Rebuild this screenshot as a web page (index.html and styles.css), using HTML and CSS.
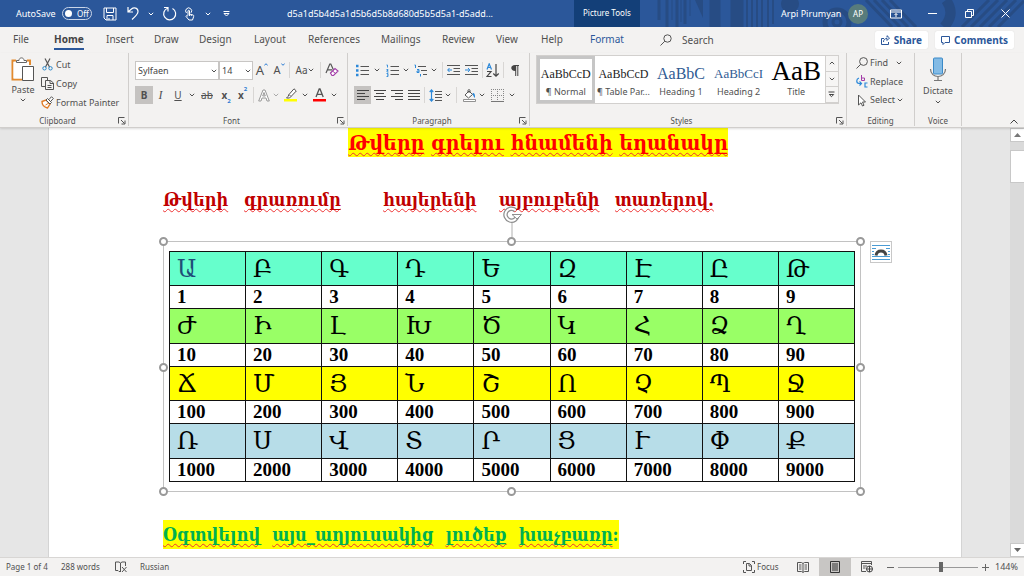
FILE: index.html
```html
<!DOCTYPE html>
<html lang="en">
<head>
<meta charset="utf-8">
<meta name="viewport" content="width=device-width, initial-scale=1">
<title>Document editor</title>
<link rel="stylesheet" href="styles.css">
</head>
<body>
<svg class="defs" aria-hidden="true">
  <symbol id="chev" viewBox="0 0 6 4"><path d="M.8.8 3 3 5.2.8" fill="none" stroke="currentColor" stroke-width="1"/></symbol>
  <symbol id="launch" viewBox="0 0 8 8"><path d="M.5 6.500V.5H6.500M3 3 6.500 6.500M7 3.500V7H3.500" fill="none" stroke="#555"/></symbol>
</svg>

<header class="titlebar">
  <svg class="pattern" viewBox="0 0 370 27" aria-hidden="true">
    <g fill="none" stroke="#274c84">
      <path d="M5 0V20M13 0V27M23 0V27M31 0V24" stroke-width="3"/>
      <path d="M18 0V20M27 0V22M36 0V16" stroke-width="1"/>
      <path d="M61 0V27" stroke-width="11"/><path d="M83 0V27" stroke-width="13"/>
      <path d="M93 0V27M98 0V27M103 0V27M108 0V27M114 0V27M119 0V24" stroke-width="2"/>
      <path d="M41 0 49 18V0Z" fill="#274c84" stroke="none"/>
      <circle cx="136" cy="4" r="9" fill="#274c84" stroke="none"/>
      <circle cx="183" cy="22" r="12" stroke-width="5"/><circle cx="183" cy="22" r="4" stroke-width="3"/>
      <path d="M212 0 238 27M220 0 246 27M228 0 254 27M236 0 262 27" stroke-width="3"/>
      <path d="M292 0Q302 14 290 27" stroke-width="10"/>
      <path d="M308 27 335 0M317 27 344 0M326 27 353 0M335 27 362 0M344 27 370 1" stroke-width="3"/>
    </g>
  </svg>
  <div class="quick">
    <span id="autosave">AutoSave</span>
    <button class="toggle" aria-labelledby="autosave"><i></i>Off</button>
    <button aria-label="Save"><svg width="14" height="14" viewBox="0 0 14 14"><path d="M1 1H13V13H3L1 11ZM3.500 1V5.500H10.500V1M4 13V8.500H10V13M6 11V13" fill="none" stroke="#fff"/></svg></button>
    <button aria-label="Undo"><svg width="14" height="15" viewBox="0 0 14 15"><path d="M2 1V6H7M2 6 5.500 3C8 1 12 2 12 5.500C12 8 10 10 6 13.500" fill="none" stroke="#fff" stroke-width="1.200"/></svg></button>
    <button aria-label="Undo list"><svg class="chev"><use href="#chev"/></svg></button>
    <button aria-label="Repeat"><svg width="15" height="15" viewBox="0 0 15 15"><path d="M2 1.500H6V5.500M5.500 2.200A6 6 0 1 0 10.500 2.500" fill="none" stroke="#fff" stroke-width="1.200"/></svg></button>
    <button aria-label="Touch mode"><svg width="11" height="14" viewBox="0 0 11 14"><path d="M2.500 6A3 3 0 1 1 7 5.800M4 8.500V4C4 3 5.500 3 5.500 4V7L9 8C10 8.300 9.800 9 9.500 10L8.500 13H5L2 9.500C2 8.500 3 8.300 4 9.300M5.500 7V9M7.300 7.500V9" fill="none" stroke="#fff"/></svg></button>
    <button aria-label="Touch list"><svg class="chev"><use href="#chev"/></svg></button>
    <button aria-label="Customize"><svg width="7" height="6" viewBox="0 0 7 6"><path d="M.5.5H6.500M1 2.500H6L3.500 5Z" fill="none" stroke="#fff"/></svg></button>
  </div>
  <div class="doc-title">d5a1d5b4d5a1d5b6d5b8d680d5b5d5a1-d5add...</div>
  <div class="tools">Picture Tools</div>
  <div class="account">
    <span>Arpi Pirumyan</span>
    <span class="avatar">AP</span>
    <button aria-label="Ribbon options"><svg width="12" height="10" viewBox="0 0 12 10"><path d="M.5 1H11.500V9H.5ZM.5 3H11.500M6 8V4.500M4.500 6 6 4.500 7.500 6" fill="none" stroke="#fff"/></svg></button>
    <button aria-label="Minimize"><svg width="9" height="9" viewBox="0 0 9 9"><path d="M0 4.500H9" stroke="#fff"/></svg></button>
    <button aria-label="Restore"><svg width="9" height="9" viewBox="0 0 9 9"><path d="M.5 2.500H6.500V8.500H.5ZM2.500 2.500V.5H8.500V6.500H6.500" fill="none" stroke="#fff"/></svg></button>
    <button aria-label="Close"><svg width="9" height="9" viewBox="0 0 9 9"><path d="M.5.5 8.500 8.500M8.500.5.5 8.500" stroke="#fff"/></svg></button>
  </div>
</header>

<nav class="tabs">
  <div class="tablist">
    <a href="#">File</a><a href="#" class="current">Home</a><a href="#">Insert</a><a href="#">Draw</a><a href="#">Design</a><a href="#">Layout</a><a href="#">References</a><a href="#">Mailings</a><a href="#">Review</a><a href="#">View</a><a href="#">Help</a><a href="#" class="format">Format</a>
    <button class="search"><svg width="12" height="12" viewBox="0 0 12 12"><circle cx="7.500" cy="4.500" r="3.700" fill="none" stroke="#555"/><path d="M4.800 7.200.5 11.500" stroke="#555"/></svg>Search</button>
  </div>
  <div class="share">
    <button><svg width="9" height="10" viewBox="0 0 9 10"><path d="M3 3.500H.5V9.500H7.500V7M2.500 7C2.500 4.500 4 3.500 6 3.500V5.500L8.500 3 6 .7V2.500" fill="none" stroke="#2b579a"/></svg>Share</button>
    <button><svg width="9" height="9" viewBox="0 0 9 9"><path d="M.5.5H8.500V6.500H4L2 8.500V6.500H.5Z" fill="none" stroke="#2b579a"/></svg>Comments</button>
  </div>
</nav>

<section class="ribbon">
  <div class="group clipboard">
    <div class="clip">
      <button class="paste"><svg width="24" height="25" viewBox="0 0 24 25"><path d="M5 3.500H1.500V22.500H11M16 3.500H19V8" fill="none" stroke="#e38a2e" stroke-width="2"/><path d="M2.500 5H18V9H11V21.500H2.500Z" fill="#fff"/><path d="M5.500 5.500V3.500H8C8 0 13 0 13 3.500H15.500V5.500Z" fill="#fff" stroke="#666"/><path d="M11.500 9.500H22.500V23.500H11.500Z" fill="#fff" stroke="#555"/></svg><span>Paste</span><svg class="chev"><use href="#chev"/></svg></button>
      <div class="clip-list">
        <button><svg width="13" height="13" viewBox="0 0 13 13"><path d="M4 .5 8.500 9M9 .5 4.500 9" fill="none" stroke="#555" stroke-width="1.200"/><circle cx="3.500" cy="10.300" r="1.700" fill="none" stroke="#2b88c9"/><circle cx="9.500" cy="10.300" r="1.700" fill="none" stroke="#2b88c9"/></svg>Cut</button>
        <button><svg width="13" height="13" viewBox="0 0 13 13"><path d="M4.500 9.500H.5V.5H6.500V3M4.500 3.500H9.500L12.500 6V12.500H4.500ZM9 3.500V6.500H12.500M6.500 8.500H10.500M6.500 10.500H10.500" fill="none" stroke="#555"/></svg>Copy</button>
        <button><svg width="13" height="13" viewBox="0 0 13 13"><path d="M1 5.500 5 4 9 8 6.500 12C3 11 1 9 1 5.500Z" fill="#fff" stroke="#e07b26" stroke-width="1.400"/><path d="M4.500 9 8 7" stroke="#e07b26"/><path d="M5 4 6.500 2.500 10.500 6.500 9 8ZM8 3.500 10.500.7 12.300 2.500 9.600 5.500" fill="#fff" stroke="#555"/></svg>Format Painter</button>
      </div>
    </div>
    <div class="label wide">Clipboard<svg class="launch"><use href="#launch"/></svg></div>
  </div>

  <div class="group font">
    <div class="rows">
      <div class="row font1">
        <span class="pick"><select aria-label="Font"><option>Sylfaen</option></select><svg class="chev"><use href="#chev"/></svg></span>
        <span class="pick"><select aria-label="Font size"><option>14</option></select><svg class="chev"><use href="#chev"/></svg></span>
        <button aria-label="Grow font"><span class="big">A</span><svg class="tick" viewBox="0 0 4 3"><path d="M.3 2.500 2 .7 3.700 2.500" fill="none" stroke="#2b7cd3"/></svg></button>
        <button aria-label="Shrink font"><span class="mid">A</span><svg class="tick" viewBox="0 0 4 3"><path d="M.3.5 2 2.300 3.700.5" fill="none" stroke="#2b7cd3"/></svg></button>
        <i class="sep"></i>
        <button><span>Aa</span><svg class="chev"><use href="#chev"/></svg></button>
        <i class="sep"></i>
        <button aria-label="Clear formatting"><svg width="14" height="14" viewBox="0 0 14 14"><path d="M1 10 4.800 1H5.800L8.500 7M2.500 6.800H7" fill="none" stroke="#555" stroke-width="1.200"/><path d="M5.500 10 10 5.500 13 8 8.500 12.500H7Z" fill="#fff" stroke="#a33ea8" stroke-width="1.200"/><path d="M7.500 8 10.500 10.500" stroke="#a33ea8"/></svg></button>
      </div>
      <div class="row font2">
        <button class="on"><b>B</b></button>
        <button><em>I</em></button>
        <button><u>U</u></button>
        <button aria-label="Underline styles"><svg class="chev"><use href="#chev"/></svg></button>
        <button><s>ab</s></button>
        <button><b>x</b><sub>2</sub></button>
        <button><b>x</b><sup>2</sup></button>
        <i class="sep"></i>
        <button aria-label="Text effects"><svg width="12" height="13" viewBox="0 0 12 13"><path d="M.7 12 5 1H7L11.300 12H9L8 9H4L3 12ZM4.700 7H7.300L6 3.500Z" fill="#fff" stroke="#999"/></svg></button>
        <button class="dim" aria-label="Effects list"><svg class="chev"><use href="#chev"/></svg></button>
        <button aria-label="Highlight"><svg width="14" height="14" viewBox="0 0 14 14"><path d="M0 11H13V13.500H0Z" fill="#ff0"/><path d="M5 6.500 10 .8 12.300 3 7 8.500ZM5 6.500 4 8.500 2.500 10H5.500L7 8.500" fill="#fff" stroke="#555"/></svg></button>
        <button aria-label="Highlight colours"><svg class="chev"><use href="#chev"/></svg></button>
        <button aria-label="Font colour"><svg width="14" height="14" viewBox="0 0 14 14"><path d="M0 11H13V13.500H0Z" fill="red"/><path d="M3 9 6.200 1H7L10.200 9M4.200 6.300H9" fill="none" stroke="#555" stroke-width="1.300"/></svg></button>
        <button aria-label="Font colours"><svg class="chev"><use href="#chev"/></svg></button>
      </div>
    </div>
    <div class="label wide">Font<svg class="launch"><use href="#launch"/></svg></div>
  </div>

  <div class="group para">
    <div class="rows">
      <div class="row para1">
        <button aria-label="Bullets"><svg width="13" height="13" viewBox="0 0 13 13"><path d="M0 2H2.500M0 6.500H2.500M0 11H2.500" stroke="#2b88d9" stroke-width="2.500"/><path d="M4.500 2.500H13M4.500 6.500H13M4.500 10.500H13" stroke="#555"/></svg></button>
        <button aria-label="Bullet list"><svg class="chev"><use href="#chev"/></svg></button>
        <button aria-label="Numbering"><svg width="13" height="13" viewBox="0 0 13 13"><path d="M.5 1H1.500V3.500M.5 5.500H2V6.500H1V8H2.500M.5 9.500H2V12.500H.5M1 11H2" fill="none" stroke="#2b88d9" stroke-width=".9"/><path d="M4.500 2.500H13M4.500 6.500H13M4.500 10.500H13" stroke="#555"/></svg></button>
        <button aria-label="Numbering list"><svg class="chev"><use href="#chev"/></svg></button>
        <button aria-label="Multilevel"><svg width="13" height="13" viewBox="0 0 13 13"><path d="M.5 1H1.500V4M3 5.500H5V8.500H3V7H5M6.500 10V12.500" fill="none" stroke="#2b88d9"/><path d="M4 2.500H12M7 6.500H13M9 10.500H13" stroke="#555"/></svg></button>
        <button aria-label="Multilevel list"><svg class="chev"><use href="#chev"/></svg></button>
        <i class="sep"></i>
        <button aria-label="Decrease indent"><svg width="13" height="11" viewBox="0 0 13 11"><path d="M0 .5H13M6.500 3.500H13M6.500 6.500H13M0 9.500H13" stroke="#555"/><path d="M5 5H.8M2.500 3 .7 5 2.500 7" fill="none" stroke="#2b88d9"/></svg></button>
        <button aria-label="Increase indent"><svg width="13" height="11" viewBox="0 0 13 11"><path d="M0 .5H13M6.500 3.500H13M6.500 6.500H13M0 9.500H13" stroke="#555"/><path d="M0 5H4.500M3 3 4.800 5 3 7" fill="none" stroke="#2b88d9"/></svg></button>
        <i class="sep"></i>
        <button aria-label="Sort"><svg width="14" height="15" viewBox="0 0 14 15"><path d="M1 6.500 3.200.8 5.500 6.500M1.800 4.500H4.700" fill="none" stroke="#2b88d9" stroke-width="1.200"/><path d="M1 8.500H5L1 13.500H5.500M10 1V13M7.300 10.500 10 13.200 12.700 10.500" fill="none" stroke="#444" stroke-width="1.200"/></svg></button>
        <i class="sep"></i>
        <button aria-label="Show marks"><svg width="8" height="11" viewBox="0 0 8 11"><path d="M4 0H8V1H7.300V11H6.300V1H5.200V11H4.200V6C-1 6-1 0 4 0Z" fill="#444"/></svg></button>
      </div>
      <div class="row para2">
        <button class="on" aria-label="Align left"><svg width="12" height="11" viewBox="0 0 12 11"><path d="M0 .5H12M0 3.500H8M0 6.500H12M0 9.500H8" stroke="#444"/></svg></button>
        <button aria-label="Centre"><svg width="12" height="11" viewBox="0 0 12 11"><path d="M0 .5H12M2 3.500H10M0 6.500H12M2 9.500H10" stroke="#444"/></svg></button>
        <button aria-label="Align right"><svg width="12" height="11" viewBox="0 0 12 11"><path d="M0 .5H12M4 3.500H12M0 6.500H12M4 9.500H12" stroke="#444"/></svg></button>
        <button aria-label="Justify"><svg width="12" height="11" viewBox="0 0 12 11"><path d="M0 .5H12M0 3.500H12M0 6.500H12M0 9.500H12" stroke="#444"/></svg></button>
        <i class="sep"></i>
        <button aria-label="Line spacing"><svg width="13" height="13" viewBox="0 0 13 13"><path d="M2.500 1V12M.7 3 2.500 1 4.300 3M.7 10 2.500 12 4.300 10" fill="none" stroke="#2b88d9" stroke-width="1.200"/><path d="M6 2.500H13M6 5.500H13M6 8.500H13M6 11.500H13" stroke="#555"/></svg></button>
        <button aria-label="Spacing list"><svg class="chev"><use href="#chev"/></svg></button>
        <i class="sep"></i>
        <button aria-label="Shading"><svg width="13" height="13" viewBox="0 0 13 13"><path d="M.5 10.500H12.500V12.500H.5Z" fill="#fff" stroke="#777" stroke-width=".8"/><path d="M2 6 6 2 9.500 5.500 5.500 9ZM5 4V1.500C5 .3 7 .3 7 1.500V4" fill="#fff" stroke="#555"/><path d="M9.500 4C12 4 12 6 12 9C11 8 10 7 9.500 4Z" fill="#2b88d9"/></svg></button>
        <button aria-label="Shading list"><svg class="chev"><use href="#chev"/></svg></button>
        <button aria-label="Borders"><svg width="13" height="13" viewBox="0 0 13 13"><path d="M.5 0V12M12.500 0V12M0 .5H13M6.500 0V12M0 6.500H13" fill="none" stroke="#888" stroke-dasharray="1 1"/><path d="M0 12.500H13" stroke="#777"/></svg></button>
        <button aria-label="Border list"><svg class="chev"><use href="#chev"/></svg></button>
      </div>
    </div>
    <div class="label wide">Paragraph<svg class="launch"><use href="#launch"/></svg></div>
  </div>

  <div class="group styles">
    <div class="gallery">
      <button class="picked"><span class="sample">AaBbCcD</span><span>¶ Normal</span></button>
      <button><span class="sample">AaBbCcD</span><span>¶ Table Par...</span></button>
      <button><span class="sample h1s">AaBbC</span><span>Heading 1</span></button>
      <button><span class="sample h2s">AaBbCcI</span><span>Heading 2</span></button>
      <button><span class="sample ts">AaB</span><span>Title</span></button>
      <div class="scrolls">
        <button aria-label="Previous styles"><svg class="chev up"><use href="#chev"/></svg></button>
        <button aria-label="Next styles"><svg class="chev"><use href="#chev"/></svg></button>
        <button aria-label="More styles"><svg width="7" height="7" viewBox="0 0 7 7"><path d="M.5 1H6.500M1.300 3.500H5.700L3.500 5.700Z" fill="none" stroke="#444"/></svg></button>
      </div>
    </div>
    <div class="label wide">Styles<svg class="launch"><use href="#launch"/></svg></div>
  </div>

  <div class="group editing">
    <div class="edit-list">
      <button><svg width="12" height="13" viewBox="0 0 12 13"><circle cx="7.500" cy="4.500" r="3.900" fill="none" stroke="#555"/><path d="M4.700 7.300.5 11.500" stroke="#555"/></svg>Find<svg class="chev gap"><use href="#chev"/></svg></button>
      <button><svg width="12" height="13" viewBox="0 0 12 13"><path d="M5.500 0V5.500M5.500 3H8.500V5.500H5.500" fill="none" stroke="#a33ea8"/><path d="M3 3C0 4 0 8 3 8.500H5M3.500 6.500 5.500 8.500 3.500 10.500M11.500 8H9V12H11.500" fill="none" stroke="#2b88d9" stroke-width="1.200"/></svg>Replace</button>
      <button><svg width="12" height="13" viewBox="0 0 12 13"><path d="M2.500 1V11L5 8.800 6.500 12 8 11.300 6.500 8H9.500Z" fill="#fff" stroke="#555"/></svg>Select<svg class="chev"><use href="#chev"/></svg></button>
    </div>
    <div class="label">Editing</div>
  </div>

  <div class="group voice">
    <button class="paste"><svg width="18" height="25" viewBox="0 0 18 25"><rect x="4.500" y="1" width="9" height="16" rx="1" fill="#83bbe5" stroke="#3a8ac8"/><path d="M1.500 12C1.500 22 16.500 22 16.500 12M9 19.500V23M5 23.500H13" fill="none" stroke="#777" stroke-width="1.200"/></svg><span>Dictate</span><svg class="chev"><use href="#chev"/></svg></button>
    <div class="label">Voice</div>
  </div>
  <button class="collapse" aria-label="Collapse ribbon"><svg width="8" height="5" viewBox="0 0 8 5"><path d="M.5 4.500 4 1 7.500 4.500" fill="none" stroke="#444"/></svg></button>
</section>

<main class="workspace">
  <article class="page" lang="hy">
    <h1><mark><span>Թվերը</span> <span>գրելու</span> <span>հնամենի</span> <span>եղանակը</span></mark></h1>
    <p class="intro"><span>Թվերի</span><span>գրառումը</span><span>հայերենի</span><span>այբուբենի</span><span>տառերով.</span></p>
    <figure>
      <table>
        <tbody>
        <tr class="aqua"><td class="first">Ա</td><td>Բ</td><td>Գ</td><td>Դ</td><td>Ե</td><td>Զ</td><td>Է</td><td>Ը</td><td>Թ</td></tr>
        <tr><td>1</td><td>2</td><td>3</td><td>4</td><td>5</td><td>6</td><td>7</td><td>8</td><td>9</td></tr>
        <tr class="green"><td>Ժ</td><td>Ի</td><td>Լ</td><td>Խ</td><td>Ծ</td><td>Կ</td><td>Հ</td><td>Ձ</td><td>Ղ</td></tr>
        <tr><td>10</td><td>20</td><td>30</td><td>40</td><td>50</td><td>60</td><td>70</td><td>80</td><td>90</td></tr>
        <tr class="yellow"><td>Ճ</td><td>Մ</td><td>Յ</td><td>Ն</td><td>Շ</td><td>Ո</td><td>Չ</td><td>Պ</td><td>Ջ</td></tr>
        <tr><td>100</td><td>200</td><td>300</td><td>400</td><td>500</td><td>600</td><td>700</td><td>800</td><td>900</td></tr>
        <tr class="blue"><td>Ռ</td><td>Ս</td><td>Վ</td><td>Տ</td><td>Ր</td><td>Ց</td><td>Ւ</td><td>Փ</td><td>Ք</td></tr>
        <tr><td>1000</td><td>2000</td><td>3000</td><td>4000</td><td>5000</td><td>6000</td><td>7000</td><td>8000</td><td>9000</td></tr>
        </tbody>
      </table>
      <i class="handle nw"></i><i class="handle n"></i><i class="handle ne"></i><i class="handle w"></i><i class="handle e"></i><i class="handle sw"></i><i class="handle s"></i><i class="handle se"></i>
      <svg class="rotate" viewBox="0 0 20 36" aria-hidden="true"><path d="M10 18V32" stroke="#b0b0b0"/><path d="M15.500 10A6 6 0 1 1 13.500 5.200" fill="none" stroke="#8f8f8f" stroke-width="4.500"/><path d="M15.500 10A6 6 0 1 1 13.500 5.200" fill="none" stroke="#fff" stroke-width="2"/><path d="M10 9.500H19.500L15 14Z" fill="#fff" stroke="#8f8f8f"/></svg>
      <button class="layout-opt" aria-label="Layout options"><svg width="18" height="16" viewBox="0 0 18 16"><path d="M0 1.500H18M0 4.500H4M14 4.500H18M0 7.500H2M16 7.500H18M0 10.500H2M16 10.500H18M0 12.500H18M0 15.500H18" stroke="#4a9bd4"/><path d="M4 11.500C5 5.500 13 5.500 14 11.500" fill="none" stroke="#444" stroke-width="3"/></svg></button>
    </figure>
    <p class="outro"><mark><span>Օգտվելով</span><span>այս_աղյուսակից</span><span>լուծեք</span><span>խաչբառը</span>:</mark></p>
  </article>
  <div class="scrollbar">
    <button aria-label="Scroll up"><svg width="7" height="4" viewBox="0 0 7 4"><path d="M0 4 3.500 0 7 4Z" fill="#777"/></svg></button>
    <i class="thumb"></i>
    <button class="down" aria-label="Scroll down"><svg width="7" height="4" viewBox="0 0 7 4"><path d="M0 0 3.500 4 7 0Z" fill="#666"/></svg></button>
  </div>
</main>

<footer class="status">
  <div class="stat-left">
    <span>Page 1 of 4</span><span>288 words</span>
    <svg width="12" height="12" viewBox="0 0 12 12"><path d="M6 10.500H4L3 9.500H.5V1H4L5.500 2 7 1H10.500V5M5.500 2V10M7 6 11.500 11M11.500 6 7 11" fill="none" stroke="#555"/></svg>
    <span>Russian</span>
  </div>
  <div class="stat-right">
    <button class="focus"><svg width="12" height="12" viewBox="0 0 12 12"><path d="M3 .5H.5V3M9 .5H11.500V3M.5 9V11.500H3M11.500 9V11.500H9M3.500 2.500H6.500L8.500 4.500V9.500H3.500ZM6 2.500V5H8.500" fill="none" stroke="#555"/></svg>Focus</button>
    <button aria-label="Read mode"><svg width="12" height="11" viewBox="0 0 12 11"><path d="M.5.5H4.500L6 1.500 7.500.5H11.500V9.500H7.500L6 10.500 4.500 9.500H.5ZM6 1.500V10M2 3H4.500M2 5H4.500M2 7H4.500M7.500 3H10M7.500 5H10M7.500 7H10" fill="none" stroke="#555"/></svg></button>
    <button class="view-on" aria-label="Print layout"><svg width="10" height="12" viewBox="0 0 10 12"><path d="M.5.5H9.500V11.500H.5ZM2 3H8M2 5H8M2 7H8M2 9H8" fill="none" stroke="#333"/></svg></button>
    <button aria-label="Web layout"><svg width="12" height="12" viewBox="0 0 12 12"><path d="M5 10.500H.5V.5H10.500V4M.5 2.500H10.500M2 5H6M2 7H4.500" fill="none" stroke="#555"/><circle cx="8.500" cy="8" r="3" fill="#f3f2f1" stroke="#444"/><path d="M5.500 8H11.500M8.500 5V11" stroke="#444"/></svg></button>
    <button aria-label="Zoom out"><svg width="7" height="7" viewBox="0 0 7 7"><path d="M0 3.500H7" stroke="#666"/></svg></button>
    <input type="range" min="10" max="270" value="150" aria-label="Zoom">
    <button aria-label="Zoom in"><svg width="7" height="7" viewBox="0 0 7 7"><path d="M0 3.500H7M3.500 0V7" stroke="#666"/></svg></button>
    <span>144%</span>
  </div>
</footer>
</body>
</html>
```
FILE: styles.css
```css
* { box-sizing: border-box; }
body {
  margin: 0;
  height: 100vh;
  display: flex;
  flex-direction: column;
  overflow: hidden;
  font: 10px/14px "Noto Sans", sans-serif;
  color: #505050;
  background: #f3f2f1;
}
button {
  display: flex;
  align-items: center;
  justify-content: center;
  padding: 0;
  border: 0;
  background: none;
  font: inherit;
  color: inherit;
}
svg { display: block; flex: none; }
.defs { position: absolute; width: 0; height: 0; }
.chev { width: 6px; height: 4px; }
.up { transform: rotate(180deg); }

/* Title bar */
.titlebar {
  position: relative;
  display: flex;
  align-items: center;
  height: 27px;
  flex: none;
  background: #2b579a;
  color: #fff;
  font-size: 9px;
}
.pattern { position: absolute; right: 0; top: 0; width: 370px; height: 27px; }
.quick {
  display: grid;
  grid-template-columns: 46px 30px 35px 12px 23px 14px 26px 12px 24px;
  align-items: center;
  padding-left: 16px;
}
.toggle {
  height: 13px;
  border: 1px solid #c9d5e8;
  border-radius: 7px;
  gap: 5px;
  font-size: 8px;
}
.toggle i { width: 7px; height: 7px; border-radius: 50%; background: #fff; }
.doc-title { margin-left: 49px; width: 287px; }
.tools {
  position: relative;
  height: 27px;
  padding: 0 9px;
  line-height: 25px;
  font-size: 8px;
  background: #133f78;
  white-space: nowrap;
}
.account {
  position: relative;
  margin-left: auto;
  display: grid;
  grid-template-columns: 67px 20px 55px 19px 55px 17px;
  align-items: center;
  padding-right: 10px;
  white-space: nowrap;
}
.avatar {
  height: 20px;
  border-radius: 50%;
  background: #587c7c;
  font-size: 8px;
  line-height: 20px;
  text-align: center;
}

/* Tabs */
.tabs {
  display: flex;
  justify-content: space-between;
  align-items: center;
  height: 26px;
  flex: none;
  padding-right: 10px;
}
.tablist {
  display: grid;
  grid-template-columns: 41px 52px 48px 45px 55px 54px 73px 61px 54px 45px 49px 70px auto;
  padding-left: 13px;
}
.tabs a { justify-self: start; color: inherit; text-decoration: none; line-height: 19px; height: 20px; }
.tabs .current { font-weight: 700; border-bottom: 2px solid #2b579a; color: #444; }
.tabs .format { color: #2b579a; }
.search { gap: 10px; }
.share { display: flex; gap: 7px; }
.share button {
  height: 18px;
  padding: 0 6px;
  gap: 4px;
  background: #fff;
  border-radius: 2px;
  color: #2b579a;
  font-weight: 700;
  box-shadow: 0 0 1px #ccc;
}

/* Ribbon */
.ribbon {
  position: relative;
  z-index: 2;
  display: flex;
  height: 75px;
  flex: none;
  padding-bottom: 1px;
  font-size: 9px;
  border-bottom: 1px solid #d0cecc;
  box-shadow: 0 1px 2px #0002;
}
.group {
  display: flex;
  flex-direction: column;
  justify-content: space-between;
  border-right: 1px solid #d0cecc;
}
.label { position: relative; text-align: center; font-size: 8px; line-height: 10px; }
.wide { padding-right: 13px; }
.launch { position: absolute; right: 2px; top: 1px; width: 8px; height: 8px; }
.clipboard { width: 129px; }
.font { width: 219px; }
.para { width: 182px; }
.styles { flex: 1; }
.editing { width: 68px; }
.voice { width: 47px; }
.clip { display: flex; align-items: flex-start; padding: 2px 0 0 11px; }
.paste { flex-direction: column; gap: 1px; padding-top: 2px; }
.clip-list { display: grid; grid-template-rows: 19px 19px 19px; padding-left: 6px; }
.clip-list button, .edit-list button { justify-content: flex-start; gap: 2px; white-space: nowrap; }
.rows { display: grid; grid-template-rows: 20px 20px; row-gap: 5px; padding: 7px 0 0 6px; }
.row { display: grid; align-items: center; }
.row button { height: 18px; font-size: 10px; }
.font1 { grid-template-columns: 84px 34px 18px 16px 4px 27px 5px 18px; }
.font2 { grid-template-columns: 18px 15px 20px 8px 22px 16px 17px 4px 17px 8px 21px 8px 21px 8px; }
.para1 { grid-template-columns: 17px 12px 18px 10px 18px 10px 6px 17px 18px 4px 17px 4px 19px; }
.para2 { grid-template-columns: 17px 17px 17px 17px 5px 17px 7px 11px 14px 12px 18px 11px; }
.sep { justify-self: center; width: 1px; height: 16px; background: #d8d6d4; }
.on { background: #c5c3c1; }
.dim { color: #aaa; }
.pick { position: relative; }
.pick select {
  display: block;
  width: 100%;
  height: 19px;
  padding: 0 2px;
  appearance: none;
  border: 1px solid #c8c6c4;
  border-radius: 0;
  background: #fff;
  color: #444;
  font: 9px "Noto Sans", sans-serif;
}
.pick .chev { position: absolute; right: 2px; top: 8px; }
.tick { width: 4px; height: 3px; align-self: flex-start; margin-top: 2px; }
.row .big { font-size: 13px; }
.row .mid { font-size: 11px; }
.row sub, .row sup { font-size: 6px; line-height: 6px; color: #2b7cd3; font-weight: 700; }
.row sub { align-self: flex-end; }
.row sup { align-self: flex-start; }
.row em { font-family: "Liberation Serif", serif; font-size: 12px; }

.gallery {
  display: grid;
  grid-template-columns: repeat(5, 1fr) 13px;
  height: 49px;
  margin: 2px 7px 0 6px;
  border: 1px solid #d2d0ce;
  background: #fff;
}
.gallery > button {
  flex-direction: column;
  justify-content: flex-end;
  min-width: 0;
  padding-bottom: 4px;
  overflow: hidden;
  white-space: nowrap;
}
.gallery .picked { border: 3px solid #c6c6c6; padding-bottom: 1px; }
.sample {
  height: 21px;
  line-height: 20px;
  font-family: "Liberation Serif", serif;
  font-size: 12px;
  color: #222;
}
.h1s { font-size: 16px; color: #2f5b93; }
.h2s { font-size: 13px; color: #2f5b93; }
.ts { font-size: 27px; height: 28px; line-height: 28px; color: #000; }
.scrolls { display: grid; grid-template-rows: 1fr 1fr 1fr; }
.scrolls button { border: 1px solid #d2d0ce; border-width: 0 0 1px 1px; background: #f6f5f4; }
.edit-list { display: grid; grid-template-rows: 18px 19px 18px; padding: 1px 0 0 9px; }
.edit-list .gap { margin-left: 6px; }
.voice .paste { padding-top: 4px; gap: 2px; }
.collapse { align-self: flex-end; margin-left: auto; width: 62px; height: 10px; padding-left: 42px; }

/* Document */
.workspace { flex: 1; min-height: 0; display: flex; background: #e6e6e6; }
.page {
  flex: 1;
  margin: 0 48px;
  padding: 0 100px 0 114px;
  background: #fff;
  border: solid #d4d4d4;
  border-width: 0 1px;
  font-family: "DejaVu Serif Condensed", "DejaVu Serif", serif;
  font-weight: 700;
}
.page mark { background: #ff0; color: inherit; }
.page h1 { margin: 0 0 29px; padding-left: 52px; font-size: 21px; line-height: 29px; color: #f00; text-align: center; }
.page h1 mark { display: inline-block; white-space: nowrap; }
.page h1 span, .intro span, .outro span {
  text-decoration: underline wavy #e33 1px;
  text-decoration-skip-ink: none;
  text-underline-offset: 2px;
}
.intro {
  display: grid;
  grid-template-columns: 81px 139px 116px 116px auto;
  margin: 0;
  font-size: 18px;
  line-height: 28px;
  color: #c00000;
}
figure {
  position: relative;
  width: 698px;
  margin: 27px 0 28px;
  padding: 9px 5px;
  border: 1px solid #c2c2c2;
}
table { width: 100%; height: 231px; border-collapse: collapse; table-layout: fixed; }
td {
  height: 23px;
  padding: 0 0 0 7px;
  border: 1px solid #111;
  color: #000;
  font: 700 19px/20px "Liberation Serif", serif;
}
.aqua td, .green td, .yellow td, .blue td {
  height: 34px;
  font: 400 24px/24px "DejaVu Serif", serif;
}
.aqua { background: #66ffcc; }
.green { background: #99ff66; }
.yellow { background: #ff0; }
.blue { background: #b7dde8; }
.aqua .first { color: #1f4e79; }
.handle {
  position: absolute;
  width: 9px;
  height: 9px;
  border: 2px solid #999;
  border-radius: 50%;
  background: #fff;
}
.nw, .n, .ne { top: -5px; }
.sw, .s, .se { bottom: -5px; }
.w, .e { top: calc(50% - 4px); }
.nw, .w, .sw { left: -5px; }
.ne, .e, .se { right: -5px; }
.n, .s { left: calc(50% - 5px); }
.rotate { position: absolute; left: calc(50% - 10px); top: -37px; width: 20px; height: 36px; }
.layout-opt {
  position: absolute;
  left: calc(100% + 10px);
  top: -1px;
  width: 22px;
  height: 22px;
  border: 1px solid #c8c8c8;
  background: #fff;
}
.outro { margin: 0; font-size: 18px; line-height: 29px; color: #00b050; }
.outro mark { display: inline-flex; white-space: nowrap; }
.outro span + span { margin-left: 12px; }
.scrollbar {
  width: 15px;
  flex: none;
  display: flex;
  flex-direction: column;
  background: #dadada;
}
.scrollbar button { height: 14px; background: #fff; border: 1px solid #c8c8c8; }
.thumb { height: 33px; margin-top: 8px; background: #fff; border: 1px solid #c8c8c8; }
.scrollbar .down { margin-top: auto; }

/* Status bar */
.status {
  height: 19px;
  flex: none;
  display: flex;
  justify-content: space-between;
  border-top: 1px solid #d8d6d4;
  font-size: 8px;
}
.stat-left {
  display: grid;
  grid-template-columns: 55px 54px 25px auto;
  align-items: center;
  padding-left: 6px;
}
.stat-right {
  display: grid;
  grid-template-columns: 44px 32px 32px 32px 15px 80px 15px 31px;
  align-items: center;
}
.stat-right button { height: 18px; }
.stat-right span { text-align: right; padding-right: 6px; font-size: 9px; }
.stat-right .focus { gap: 2px; justify-content: flex-start; }
.view-on { background: #c8c6c4; }
.stat-right input { appearance: none; width: 80px; height: 14px; margin: 0; background: none; }
.stat-right input::-webkit-slider-runnable-track {
  height: 13px;
  background: linear-gradient(#999, #999) center / 100% 1px no-repeat;
}
.stat-right input::-webkit-slider-thumb { appearance: none; width: 4px; height: 10px; margin-top: 1px; background: #666; }
```
